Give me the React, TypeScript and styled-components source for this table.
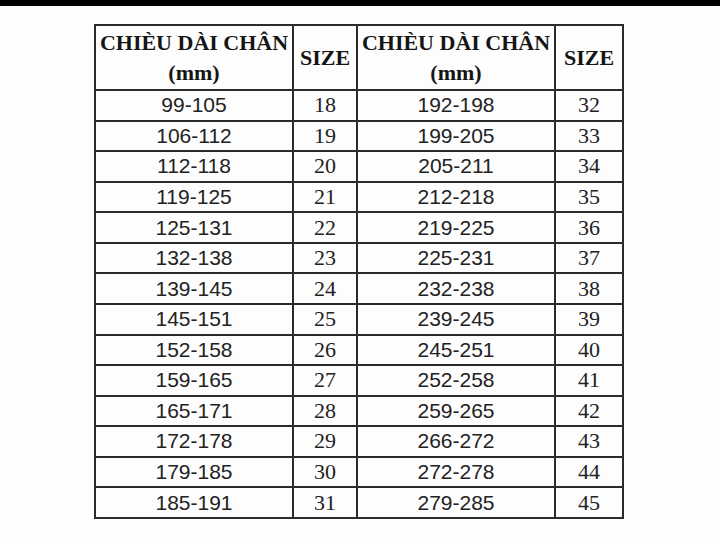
import React from "react";
import styled, { createGlobalStyle } from "styled-components";

const rows: [string, number][] = [
  ["99-105", 18],
  ["106-112", 19],
  ["112-118", 20],
  ["119-125", 21],
  ["125-131", 22],
  ["132-138", 23],
  ["139-145", 24],
  ["145-151", 25],
  ["152-158", 26],
  ["159-165", 27],
  ["165-171", 28],
  ["172-178", 29],
  ["179-185", 30],
  ["185-191", 31],
  ["192-198", 32],
  ["199-205", 33],
  ["205-211", 34],
  ["212-218", 35],
  ["219-225", 36],
  ["225-231", 37],
  ["232-238", 38],
  ["239-245", 39],
  ["245-251", 40],
  ["252-258", 41],
  ["259-265", 42],
  ["266-272", 43],
  ["272-278", 44],
  ["279-285", 45],
];

const App: React.FC = () => {
  const left = rows.slice(0, 14);
  const right = rows.slice(14);

  return (
    <>
      <GlobalStyle />
      <Page>
        <TopBar />
        <Chart>
          <colgroup>
            <col style={{ width: 198 }} />
            <col style={{ width: 64 }} />
            <col style={{ width: 198 }} />
            <col style={{ width: 68 }} />
          </colgroup>
          <thead>
            <tr>
              <HeadCell>
                CHIÈU DÀI CHÂN
                <br />
                (mm)
              </HeadCell>
              <HeadCell>SIZE</HeadCell>
              <HeadCell>
                CHIÈU DÀI CHÂN
                <br />
                (mm)
              </HeadCell>
              <HeadCell>SIZE</HeadCell>
            </tr>
          </thead>
          <tbody>
            {left.map(([range, size], i) => (
              <Row key={range}>
                <RangeCell>{range}</RangeCell>
                <SizeCell>{size}</SizeCell>
                <RangeCell>{right[i][0]}</RangeCell>
                <SizeCell>{right[i][1]}</SizeCell>
              </Row>
            ))}
          </tbody>
        </Chart>
      </Page>
    </>
  );
};

export default App;

const GlobalStyle = createGlobalStyle`
  html, body {
    margin: 0;
    padding: 0;
    background: #fdfdfd;
  }
`;

const Page = styled.div`
  width: 720px;
  height: 537px;
  overflow: hidden;
  background: #fdfdfd;
`;

const TopBar = styled.div`
  height: 6px;
  background: #000;
  margin-bottom: 18px;
`;

const Chart = styled.table`
  margin-left: 94px;
  border-collapse: collapse;
  table-layout: fixed;
  width: 528px;
  border: 2px solid #2b2b2b;
  color: #222;
`;

const HeadCell = styled.th`
  height: 63px;
  padding: 0;
  border: 2px solid #2b2b2b;
  font-family: "Liberation Serif", "Times New Roman", serif;
  font-weight: bold;
  font-size: 22px;
  line-height: 30px;
  color: #151515;
  text-align: center;
  vertical-align: middle;
  white-space: nowrap;
`;

const Row = styled.tr`
  height: 30.57px;
`;

const RangeCell = styled.td`
  padding: 0;
  border: 2px solid #2b2b2b;
  font-family: "Liberation Sans", Arial, sans-serif;
  font-size: 21px;
  line-height: 26px;
  text-align: center;
  vertical-align: middle;
`;

const SizeCell = styled(RangeCell)`
  font-family: "Liberation Serif", "Times New Roman", serif;
  font-size: 22px;
`;
